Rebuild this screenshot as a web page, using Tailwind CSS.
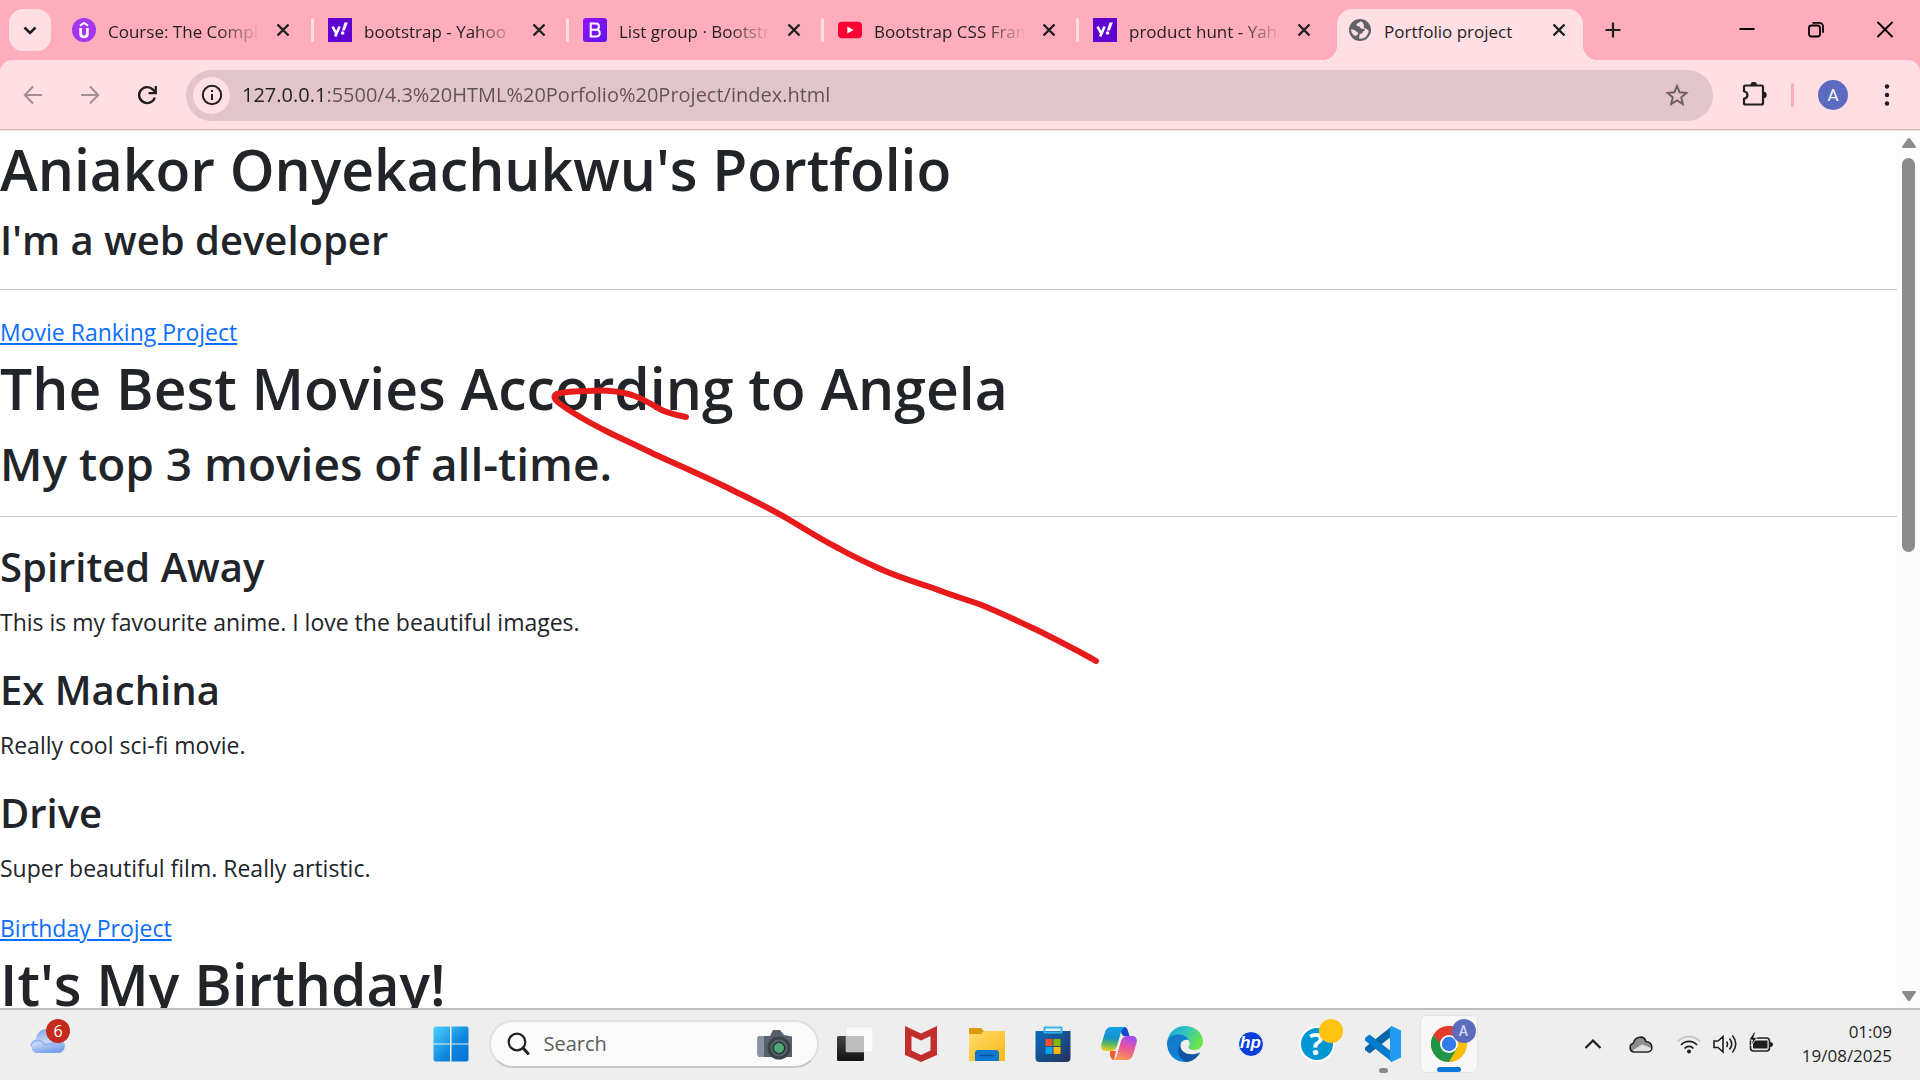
<!DOCTYPE html>
<html lang="en">
<head>
<meta charset="utf-8">
<title>Portfolio project</title>
<script src="https://cdn.jsdelivr.net/npm/@tailwindcss/browser@4"></script>
</head>
<body class="flex h-screen flex-col overflow-hidden bg-[#ffadbc] font-['Open_Sans','Noto_Sans',sans-serif] text-[#1f1f1f]">

<!-- Tab strip -->
<header class="flex h-[60px] shrink-0 items-center">
  <button aria-label="Search tabs" class="ml-[9px] flex size-[42px] shrink-0 items-center justify-center rounded-[14px] bg-[#ffdee4]">
    <svg class="size-6" viewBox="0 0 24 24" fill="none" stroke="#1f1f1f" stroke-width="2.6"><path d="M6.5 9.5l5.5 5.5 5.5-5.5"/></svg>
  </button>
  <nav aria-label="Tabs" class="ml-2 flex h-full items-center">
    <div class="flex w-[255px] items-center pl-[13px]">
      <svg class="size-6 shrink-0" viewBox="0 0 24 24"><circle cx="12" cy="12" r="12" fill="#a435f0"/><path d="M8 7.6L12 5l4 2.6" fill="none" stroke="#fff" stroke-width="2"/><path d="M8.6 10v5.6c0 4.6 6.8 4.6 6.8 0V10" fill="none" stroke="#fff" stroke-width="2.6"/></svg>
      <a href="#" class="ml-3 w-[150px] overflow-hidden pt-[3px] whitespace-nowrap text-[17px] leading-6 [mask-image:linear-gradient(to_right,#000_110px,transparent_152px)]">Course: The Complete</a>
      <button aria-label="Close tab" class="ml-[13px] size-6"><svg viewBox="0 0 24 24" stroke="#1f1f1f" stroke-width="2.4"><path d="M6.5 6.5l11 11M17.5 6.5l-11 11"/></svg></button>
      <span class="ml-auto h-6 w-[3px] rounded-sm bg-[#ffdee4]"></span>
    </div>
    <div class="flex w-[255px] items-center pl-[14px]">
      <svg class="size-6 shrink-0" viewBox="0 0 24 24"><path fill="#5f01d1" d="M0 0h24v24H0z"/><path d="M4.6 8.6l3.4 6.6M11.6 8.6L7.2 18.6" fill="none" stroke="#fff" stroke-width="2.6"/><path d="M16.5 4.5h3.4l-3 8h-3z" fill="#fff"/><circle cx="14.6" cy="15" r="1.8" fill="#fff"/></svg>
      <a href="#" class="ml-3 w-[150px] overflow-hidden pt-[3px] whitespace-nowrap text-[17px] leading-6 [mask-image:linear-gradient(to_right,#000_110px,transparent_152px)]">bootstrap - Yahoo</a>
      <button aria-label="Close tab" class="ml-[13px] size-6"><svg viewBox="0 0 24 24" stroke="#1f1f1f" stroke-width="2.4"><path d="M6.5 6.5l11 11M17.5 6.5l-11 11"/></svg></button>
      <span class="ml-auto h-6 w-[3px] rounded-sm bg-[#ffdee4]"></span>
    </div>
    <div class="flex w-[255px] items-center pl-[14px]">
      <svg class="size-6 shrink-0" viewBox="0 0 24 24"><defs><linearGradient id="bs" x1="0" y1="0" x2="1" y2="1"><stop stop-color="#9013fe"/><stop offset="1" stop-color="#6610f2"/></linearGradient></defs><rect width="24" height="24" rx="3" fill="url(#bs)"/><path d="M7.7 5.6h5.2c4 0 4 6 0 6.2H7.7zM7.7 11.8h5.6c4.6 0 4.6 6.8 0 6.8H7.7zM7.7 5v14" fill="none" stroke="#fff" stroke-width="2"/></svg>
      <a href="#" class="ml-3 w-[150px] overflow-hidden pt-[3px] whitespace-nowrap text-[17px] leading-6 [mask-image:linear-gradient(to_right,#000_110px,transparent_152px)]">List group · Bootstrap</a>
      <button aria-label="Close tab" class="ml-[13px] size-6"><svg viewBox="0 0 24 24" stroke="#1f1f1f" stroke-width="2.4"><path d="M6.5 6.5l11 11M17.5 6.5l-11 11"/></svg></button>
      <span class="ml-auto h-6 w-[3px] rounded-sm bg-[#ffdee4]"></span>
    </div>
    <div class="flex w-[255px] items-center pl-[14px]">
      <svg class="size-6 shrink-0" viewBox="0 0 24 24"><rect y="3.7" width="24" height="16.6" rx="4" fill="#ff0033"/><path d="M9.3 8.6v6.8L15.6 12z" fill="#fff"/></svg>
      <a href="#" class="ml-3 w-[150px] overflow-hidden pt-[3px] whitespace-nowrap text-[17px] leading-6 [mask-image:linear-gradient(to_right,#000_110px,transparent_152px)]">Bootstrap CSS Framework</a>
      <button aria-label="Close tab" class="ml-[13px] size-6"><svg viewBox="0 0 24 24" stroke="#1f1f1f" stroke-width="2.4"><path d="M6.5 6.5l11 11M17.5 6.5l-11 11"/></svg></button>
      <span class="ml-auto h-6 w-[3px] rounded-sm bg-[#ffdee4]"></span>
    </div>
    <div class="flex w-[255px] items-center pl-[14px]">
      <svg class="size-6 shrink-0" viewBox="0 0 24 24"><path fill="#5f01d1" d="M0 0h24v24H0z"/><path d="M4.6 8.6l3.4 6.6M11.6 8.6L7.2 18.6" fill="none" stroke="#fff" stroke-width="2.6"/><path d="M16.5 4.5h3.4l-3 8h-3z" fill="#fff"/><circle cx="14.6" cy="15" r="1.8" fill="#fff"/></svg>
      <a href="#" class="ml-3 w-[150px] overflow-hidden pt-[3px] whitespace-nowrap text-[17px] leading-6 [mask-image:linear-gradient(to_right,#000_110px,transparent_152px)]">product hunt - Yahoo</a>
      <button aria-label="Close tab" class="ml-[13px] size-6"><svg viewBox="0 0 24 24" stroke="#1f1f1f" stroke-width="2.4"><path d="M6.5 6.5l11 11M17.5 6.5l-11 11"/></svg></button>
    </div>
    <!-- Active tab with flared bottom corners -->
    <div class="relative ml-[3px] flex h-[51px] w-[246px] items-center self-end rounded-t-[15px] bg-[#ffdee4] pb-[9px] pl-[11px]">
      <span class="absolute bottom-0 -left-[15px] size-[15px] bg-[radial-gradient(circle_at_0_0,#ffadbc_15px,#ffdee4_15px)]"></span>
      <span class="absolute -right-[15px] bottom-0 size-[15px] bg-[radial-gradient(circle_at_100%_0,#ffadbc_15px,#ffdee4_15px)]"></span>
      <svg class="size-6 shrink-0" viewBox="0 0 24 24"><circle cx="12" cy="12" r="11" fill="#5f6368"/><path d="M12.5 3.2c-1 1.7-2.6 1.6-3.8 2.8-.8 1 .2 2.2 1.6 2.2 1.6 0 2.2 1 2.2 2.2 1.6.6 3.6-.2 4.4 1.2.6 1.3-1.6 1.3-2.2 2.6-.4 1.4-1.6 1.8-3 1.6.2 1.4-.8 2.6-.6 4.8 6 .8 9.4-4.2 9.6-8.2-1.4-.2-1.6-2-3.2-2-1.6.2-2.2-1.2-1.4-2.6.4-1.6-1.6-1.8-1.2-3.400z" fill="#ffdee4"/><path d="M3 11.2c2.4.2 4 .8 5.8 2.6 1 .8 1.600 1.200 1.400 2.400-.8.600-2.200.600-2.200 2-3-.8-5-4-5-7z" fill="#ffdee4"/></svg>
      <a href="#" aria-current="page" class="ml-3 w-[150px] overflow-hidden pt-[3px] whitespace-nowrap text-[17px] leading-6">Portfolio project</a>
      <button aria-label="Close tab" class="ml-[13px] size-6"><svg viewBox="0 0 24 24" stroke="#1f1f1f" stroke-width="2.4"><path d="M6.5 6.5l11 11M17.5 6.5l-11 11"/></svg></button>
    </div>
  </nav>
  <button aria-label="New tab" class="ml-[18px] size-6"><svg viewBox="0 0 24 24" stroke="#1f1f1f" stroke-width="2.2"><path d="M12 4.5v15M4.5 12h15"/></svg></button>
  <div class="ml-auto flex gap-[45px] pr-[23px]">
    <button aria-label="Minimize" class="size-6"><svg viewBox="0 0 24 24" stroke="#000" stroke-width="2"><path d="M4.500 11h15"/></svg></button>
    <button aria-label="Restore" class="size-6"><svg viewBox="0 0 24 24" fill="none" stroke="#000" stroke-width="1.8"><rect x="5" y="7.5" width="11" height="11" rx="2.5"/><path d="M8.500 4.800h7a3.500 3.500 0 0 1 3.500 3.500v6.500"/></svg></button>
    <button aria-label="Close window" class="size-6"><svg viewBox="0 0 24 24" stroke="#000" stroke-width="1.8"><path d="M4.500 4l15 15M19.500 4l-15 15"/></svg></button>
  </div>
</header>

<!-- Toolbar -->
<div class="flex h-[71px] shrink-0 items-center rounded-t-[12px] border-b border-[#ffdee4] bg-[#ffdee4] shadow-[inset_0_-1px_0_#cdb2b8]">
  <button aria-label="Back" class="ml-[21px] size-6"><svg viewBox="0 0 24 24" fill="none" stroke="#a38e93" stroke-width="2"><path d="M21 12H4M12 3.500L3.800 12l8.200 8.500"/></svg></button>
  <button aria-label="Forward" class="ml-8 size-6"><svg viewBox="0 0 24 24" fill="none" stroke="#a38e93" stroke-width="2"><path d="M4 12h17M13 3.500l8.200 8.500-8.200 8.500"/></svg></button>
  <button aria-label="Reload" class="ml-[34px] size-6"><svg viewBox="0 0 24 24" fill="none" stroke="#1f1f1f" stroke-width="2.4"><path d="M19.800 14.500A8 8 0 1 1 18 6.600l2 2"/><path d="M20.800 3v7.200h-7.200" stroke-width="2.2"/></svg></button>
  <div class="ml-[27px] flex h-[51px] flex-1 items-center rounded-full bg-[#e2c5ca] pr-6 pl-[7px]">
    <button aria-label="Site information" class="flex size-[37px] shrink-0 items-center justify-center rounded-full bg-[#ffdee4]"><svg class="size-6" viewBox="0 0 24 24" fill="none" stroke="#1f1f1f" stroke-width="2"><circle cx="12" cy="12" r="9.2"/><path d="M12 11v6M12 7v2"/></svg></button>
    <input aria-label="Address" value="127.0.0.1:5500/4.3%20HTML%20Porfolio%20Project/index.html" class="ml-3 min-w-0 flex-1 bg-[linear-gradient(to_right,#1f1f1f_80px,#5f5256_80px)] bg-clip-text text-[20px] leading-7 text-transparent outline-none">
    <button aria-label="Bookmark this tab" class="size-6"><svg viewBox="0 0 24 24" fill="none" stroke="#6b5c60" stroke-width="1.9"><path d="M12 3l2.600 6.300 6.800.6-5.200 4.400 1.600 6.700L12 17.400 6.200 21l1.600-6.700L2.600 9.900l6.800-.6z"/></svg></button>
  </div>
  <button aria-label="Extensions" class="ml-7 size-[26px]"><svg viewBox="0 0 26 26" fill="none" stroke="#1f1f1f" stroke-width="2.2"><path d="M4.500 3.500h16a1.500 1.500 0 0 1 1.500 1.500v16a1.500 1.500 0 0 1-1.500 1.500h-16A1.500 1.500 0 0 1 3 21v-4.200c4.600-1 4.600-6.600 0-7.600V5a1.500 1.500 0 0 1 1.500-1.500z"/><path d="M9.500 3a3.200 3.200 0 0 1 6.400 0zM22.500 9.800a3.200 3.200 0 0 1 0 6.400z" fill="#1f1f1f" stroke="none"/></svg></button>
  <span class="ml-6 h-6 w-[3px] rounded-sm bg-[#ffadbc]"></span>
  <button aria-label="Profile" class="ml-6 size-[30px] rounded-full bg-[#5c6bc0] font-[Roboto,sans-serif] text-[17px] leading-[30px] text-white">A</button>
  <button aria-label="Menu" class="mr-[21px] ml-[27px] size-6"><svg viewBox="0 0 24 24" fill="#1f1f1f"><circle cx="12" cy="3.5" r="2.2"/><circle cx="12" cy="12" r="2.2"/><circle cx="12" cy="20.5" r="2.2"/></svg></button>
</div>

<!-- Page viewport -->
<div class="relative flex min-h-0 flex-1 bg-white text-[#212529]">
  <main class="flex-1 overflow-hidden">
    <h1 class="mb-2 text-[57px] leading-[76px] font-semibold">Aniakor Onyekachukwu's Portfolio</h1>
    <h3 class="text-[40px] leading-[50px] font-semibold">I'm a web developer</h3>
    <hr class="my-6 border-[#c7c8c9]">
    <a href="#" class="block w-fit text-[23px] leading-9 text-[#0d6efd] underline">Movie Ranking Project</a>
    <h1 class="mb-2 text-[57px] leading-[76px] font-semibold">The Best Movies According to Angela</h1>
    <h2 class="text-[46px] leading-[58px] font-semibold">My top 3 movies of all-time.</h2>
    <hr class="my-6 border-[#c7c8c9]">
    <h3 class="mb-3 text-[40px] leading-[51px] font-semibold">Spirited Away</h3>
    <p class="mb-6 text-[23px] leading-9">This is my favourite anime. I love the beautiful images.</p>
    <h3 class="mb-3 text-[40px] leading-[51px] font-semibold">Ex Machina</h3>
    <p class="mb-6 text-[23px] leading-9">Really cool sci-fi movie.</p>
    <h3 class="mb-3 text-[40px] leading-[51px] font-semibold">Drive</h3>
    <p class="mb-6 text-[23px] leading-9">Super beautiful film. Really artistic.</p>
    <a href="#" class="block w-fit text-[23px] leading-9 text-[#0d6efd] underline">Birthday Project</a>
    <h1 class="text-[57px] leading-[76px] font-semibold">It's My Birthday!</h1>
  </main>
  <!-- Scrollbar -->
  <div class="flex w-[23px] shrink-0 flex-col items-center bg-[#fcfcfc] py-1.5">
    <svg class="h-3 w-4" viewBox="0 0 16 12" fill="#8b8b8b"><path d="M6.800 1.600q1.200-1.400 2.400 0l5.600 8q.6 1.400-1 1.400H2.200q-1.600 0-1-1.400z"/></svg>
    <span class="mt-[9px] h-[394px] w-[13px] rounded-full bg-[#8b8b8b]"></span>
    <svg class="mt-auto h-3 w-4" viewBox="0 0 16 12" fill="#8b8b8b"><path d="M6.800 10.400q1.200 1.400 2.400 0l5.600-8q.6-1.400-1-1.400H2.200q-1.600 0-1 1.400z"/></svg>
  </div>
  <!-- Pen stroke over the page -->
  <svg class="pointer-events-none absolute top-[249px] left-[544px]" width="560" height="290" viewBox="544 380 560 290" fill="none" stroke="#e71b1b" stroke-width="6" stroke-linecap="round" stroke-linejoin="round"><path d="M686 417C676 415 664 412 658 408C648 402 641 398 632 395C618 391 602 390 588 391C576 391 564 392 557 394C553 396 554 399 559 403C572 413 590 423 608 432C622 439 638 446 654 454C680 466 708 478 734 491C753 500 771 509 788 519C805 529 820 539 838 548C850 555 863 561 876 567C895 576 914 582 933 588C948 594 964 599 979 604C999 612 1018 621 1037 630C1057 640 1077 650 1096 661"/></svg>
</div>

<!-- Taskbar -->
<footer class="flex h-[72px] shrink-0 items-center bg-[#eee] shadow-[inset_0_2px_0_#bebebe]">
  <div class="flex-1 basis-0 pl-[29px]">
    <button aria-label="Weather" class="relative block h-9 w-9"><svg class="size-9" viewBox="0 0 36 36"><defs><linearGradient id="cl" x1="0" y1="0" x2=".3" y2="1"><stop stop-color="#7d9fe8"/><stop offset=".6" stop-color="#c4d8f6"/><stop offset="1" stop-color="#7ea3ea"/></linearGradient></defs><path d="M7 27a7 7 0 0 1-.5-13C8 1 24-1 27 11.500c12 .5 11 15.500 2 15.500z" fill="url(#cl)"/><path d="M2 20c1-7 10-7 13-2 6 2 10-3 18 0" fill="none" stroke="#8fb0ee" stroke-width="1.5"/></svg>
    <span class="absolute -top-[7px] left-[17px] size-6 rounded-full bg-[#c42b1c] text-center text-[16px] leading-6 text-white">6</span></button>
  </div>
  <div class="mr-[22px] flex items-center">
    <button aria-label="Start" class="flex w-[66px] justify-center"><svg class="size-9" viewBox="0 0 36 36"><defs><linearGradient id="wn" gradientUnits="userSpaceOnUse" x1="0" y1="0" x2="36" y2="36"><stop stop-color="#4fd2ff"/><stop offset=".6" stop-color="#0d84dc"/><stop offset="1" stop-color="#0072d0"/></linearGradient></defs><path fill="url(#wn)" d="M2 .5h15v17H.5V2zM18.500.5H34L35.500 2v15.500h-17zM.5 18.500H17v17H2L.5 34zM18.500 18.500h17V34L34 35.500H18.500z"/></svg></button>
    <label class="mr-[3px] ml-[5px] flex h-12 w-[330px] items-center rounded-full border-2 border-[#e0e0e0] border-b-[#c9c9c9] bg-[#fafafa] px-4">
      <svg class="size-6 shrink-0" viewBox="0 0 24 24" fill="none" stroke="#222"><circle cx="10" cy="10" r="8.3" stroke-width="2.2"/><path d="M16 16l5 5.500" stroke-width="3" stroke-linecap="round"/></svg>
      <input type="search" aria-label="Search" placeholder="Search" class="ml-[13px] min-w-0 flex-1 text-[20px] leading-7 outline-none placeholder:text-[#5c5c5c]">
      <svg class="mr-2 h-8 w-9 shrink-0" viewBox="0 0 36 32"><path d="M2 8h11l3-6h7l4 5 8 1.500V29H2L.5 27V9.500z" fill="#57616b"/><path d="M.5 9.500L2 8h5v21H2L.5 27z" fill="#8793a0"/><circle cx="22" cy="20" r="11.5" fill="#3a424b"/><circle cx="22" cy="20" r="8.5" fill="#59636d"/><circle cx="22" cy="20" r="6.5" fill="#1f3a33"/><circle cx="22" cy="20" r="5" fill="#4fa579"/></svg>
    </label>
    <button aria-label="Task view" class="flex w-[66px] justify-center"><svg class="size-9" viewBox="0 0 36 36"><defs><linearGradient id="tv" x1="0" y1="0" x2="0" y2="1"><stop stop-color="#444"/><stop offset="1" stop-color="#111"/></linearGradient></defs><rect y="10" width="27" height="25" rx="1.5" fill="url(#tv)"/><rect x="9" y="1" width="27" height="25" rx="1" fill="#fafafa" stroke="#ddd" stroke-width=".5"/><path d="M9 10h18v16H9z" fill="#bdbdbd"/></svg></button>
    <button aria-label="McAfee" class="flex w-[66px] justify-center"><svg class="size-9" viewBox="0 0 36 36"><path d="M2 0l16 7.500L34 0v29l-16 7-16-7zM8.500 10v14.500L18 29l9.500-4.500V10L18 14.500z" fill="#c12e2c"/></svg></button>
    <button aria-label="File Explorer" class="flex w-[66px] justify-center"><svg class="size-9" viewBox="0 0 36 36"><defs><linearGradient id="fx" x1="0" y1="0" x2="1" y2="1"><stop stop-color="#ffdc6e"/><stop offset="1" stop-color="#fbb812"/></linearGradient></defs><path d="M0 2h12l4 4-4 4H0z" fill="#dd9b0b"/><path d="M0 8h12l3-3h21v30H0z" fill="url(#fx)"/><path d="M6 35V27q0-3 3-3h18q3 0 3 3v8z" fill="#1077cf"/><path d="M11 29.500h14" stroke="#0b4f93" stroke-width="1.5"/></svg></button>
    <button aria-label="Microsoft Store" class="flex w-[66px] justify-center"><svg class="size-9" viewBox="0 0 36 36"><defs><linearGradient id="st" x1="0" y1="0" x2="1" y2="1"><stop stop-color="#0b6cbf"/><stop offset="1" stop-color="#25325a"/></linearGradient></defs><path d="M.5 5h35v27q0 4-4 4h-27q-4 0-4-4z" fill="url(#st)"/><path d="M9.500 5V1.500h17V5" fill="#eee"/><path d="M9.500 1.500h17v5h-17z" fill="none" stroke="#35b5ee" stroke-width="1.8"/><path d="M10.500 13h7v7h-7z" fill="#f25022"/><path d="M18.500 13h7v7h-7z" fill="#7fba00"/><path d="M10.500 21h7v7h-7z" fill="#00a4ef"/><path d="M18.500 21h7v7h-7z" fill="#ffb900"/></svg></button>
    <button aria-label="Copilot" class="flex w-[66px] justify-center"><svg class="size-9" viewBox="0 0 36 36"><defs><linearGradient id="c1" x1=".3" y1="0" x2=".2" y2="1"><stop stop-color="#159fe8"/><stop offset=".45" stop-color="#1593c8"/><stop offset=".7" stop-color="#5cb85c"/><stop offset="1" stop-color="#f4d321"/></linearGradient><linearGradient id="c2" x1=".6" y1="0" x2=".3" y2="1"><stop stop-color="#a24df2"/><stop offset=".45" stop-color="#e8559c"/><stop offset="1" stop-color="#ff9a50"/></linearGradient></defs><path d="M17 1h6q3 0 4 4l1.500 5H22z" fill="#1449c8"/><path d="M10 1h15c-3 0-4 2-5 5l-4 14c-1 3-3 5-6 5H5c-4 0-5.500-3-4.500-7L4 6c1-3 3-5 6-5z" fill="url(#c1)"/><path d="M9 25h6l-2 9c-3-.5-3.500-3-4-5z" fill="#f0602e"/><path d="M26 10h5c4 0 5.500 3 4.500 7L32 29c-1 3-3 5-6 5H12c2 0 3-2 4-5l4-14c1-3 3-5 6-5z" fill="url(#c2)"/></svg></button>
    <button aria-label="Edge" class="flex w-[66px] justify-center"><svg class="size-9" viewBox="0 0 36 36"><defs><linearGradient id="e1" x1="0" y1="0" x2="1" y2=".4"><stop stop-color="#1ea0d8"/><stop offset=".5" stop-color="#2ec4c6"/><stop offset="1" stop-color="#6be34f"/></linearGradient><linearGradient id="e2" x1="0" y1="0" x2=".6" y2="1"><stop stop-color="#1577bd"/><stop offset="1" stop-color="#0c86e0"/></linearGradient></defs><path d="M0 17C1 6 9 0 18 0c10 0 18 7 18 15.500 0 5-4 8.500-8.500 8.500-4 0-6.500-1.500-6-3.200 3-4 0-9.300-6-9.300C8 11.500 2 14 0 17z" fill="url(#e1)"/><path d="M0 17C1 11 6 8.500 11 8.500c5 0 9.500 2 10.800 5.500-5-1.500-8.800 2-8.800 7 0 6 5 10 10 14-12 4-23-5-23-18z" fill="url(#e2)"/><path d="M13.500 17c-1.500 10 9 14 20 9.200C30 32 25 36 19 36 12 33 8 24 13.500 17z" fill="#0f559f"/></svg></button>
    <button aria-label="HP" class="flex w-[66px] justify-center"><span class="size-[26px] rounded-full border border-white bg-[#0a3fd9] text-center font-['Liberation_Sans',sans-serif] text-[17px] leading-[22px] font-bold text-white italic">hp</span></button>
    <button aria-label="HP Support, new notification" class="relative flex w-[66px] justify-center"><span class="size-9 rounded-full border-2 border-white bg-[#0096d6] text-center text-[30px] leading-8 font-bold text-white">?</span><span class="absolute -top-[7px] left-[35px] size-6 rounded-full bg-[#ffc20e]"></span></button>
    <button aria-label="Visual Studio Code" class="relative flex w-[66px] justify-center"><svg class="size-9" viewBox="0 0 36 36"><path d="M27 0v10L4.500 27.500 0 24v-2.500z" fill="#0065a9"/><path d="M27 36V26L4.500 8.500 0 12v2.500z" fill="#007acc"/><path d="M26.500 0L36 4.500v27L26.500 36q-1.500-.5-1.500-2V2q0-1.500 1.500-2z" fill="#1f9cf0"/></svg><span class="absolute -bottom-[11px] left-[29px] h-[5px] w-[9px] rounded-full bg-[#8a8a8a]"></span></button>
    <button aria-label="Google Chrome" class="relative mx-1 flex h-[58px] w-[58px] items-center justify-center rounded-md border border-[#e3e3e3] bg-[#f7f7f7]"><svg class="size-9" viewBox="0 0 36 36"><circle cx="18" cy="18" r="18" fill="#fbbc05"/><path d="M2.400 9A18 18 0 0 1 33.600 9L18 10 11 22z" fill="#e33b2e"/><path d="M2.400 9A18 18 0 0 0 18 36l8-14-12 1z" fill="#219447"/><circle cx="18" cy="18" r="9" fill="#fff"/><circle cx="18" cy="18" r="7.2" fill="#2f7bea"/></svg><span class="absolute top-[3px] left-[31px] size-6 rounded-full bg-[#5c6bc0] text-center font-[Roboto,sans-serif] text-[14px] leading-6 font-medium text-[#d5d9f0]">A</span><span class="absolute bottom-0 left-4 h-[5px] w-6 rounded-full bg-[#0a78d4]"></span></button>
  </div>
  <div class="flex flex-1 basis-0 items-center justify-end pr-7">
    <button aria-label="Show hidden icons" class="mr-6 size-6"><svg viewBox="0 0 24 24" fill="none" stroke="#1f1f1f" stroke-width="2.2"><path d="M4.500 16L12 8.500l7.500 7.500"/></svg></button>
    <button aria-label="OneDrive" class="mr-6 size-6"><svg viewBox="0 0 24 24" stroke="#1f1f1f" stroke-width="1.6"><path d="M5 20a4.500 4.500 0 0 1-.6-8.800C6 4 15 3 17 9.500c7 0 8 10.500 1.500 10.500z" fill="#8f8f8f"/><path d="M3.500 18.500L13 12.500l9 3.500c0 2-2 3.200-3.500 3.200H5z" fill="#e0e0e0" stroke="none"/></svg></button>
    <button aria-label="Wi-Fi" class="mr-3 size-6"><svg viewBox="0 0 24 24" fill="none" stroke="#1f1f1f" stroke-width="1.8"><path d="M.8 9.500c6-6.600 16.400-6.600 22.400 0" stroke="#c4c4c4"/><path d="M4 13c4.400-4.800 11.600-4.800 16 0M7.500 16.500c2.500-2.800 6.500-2.800 9 0"/><circle cx="12" cy="19.500" r="2" fill="#1f1f1f" stroke="none"/></svg></button>
    <button aria-label="Volume" class="mr-3 size-6"><svg viewBox="0 0 24 24" fill="none" stroke="#1f1f1f" stroke-width="1.6"><path d="M1 9h4l5-4.500v15.500L5 15.500H1zM13.500 9.500q2 2.500 0 5.500M16.500 6.500q4.500 5.500 0 11M19.500 3.500q6.500 8.500 0 17"/></svg></button>
    <button aria-label="Battery charging" class="size-6"><svg viewBox="0 0 24 24"><rect x="1.5" y="6" width="19" height="13" rx="3" fill="none" stroke="#1f1f1f" stroke-width="1.6"/><path d="M4 8.500h14.500v8H4z" fill="#1f1f1f"/><path d="M21 10q3 .3 3 2.500t-3 2.500z" fill="#1f1f1f"/><path d="M5 0L0 8h3.500L2 14l6-8.500H4.800L6.500 0z" fill="#1f1f1f" stroke="#eee" stroke-width=".8"/></svg></button>
    <time datetime="2025-08-19T01:09" class="w-[119px] text-right text-[17px] leading-6">01:09<br>19/08/2025</time>
  </div>
</footer>
</body>
</html>
